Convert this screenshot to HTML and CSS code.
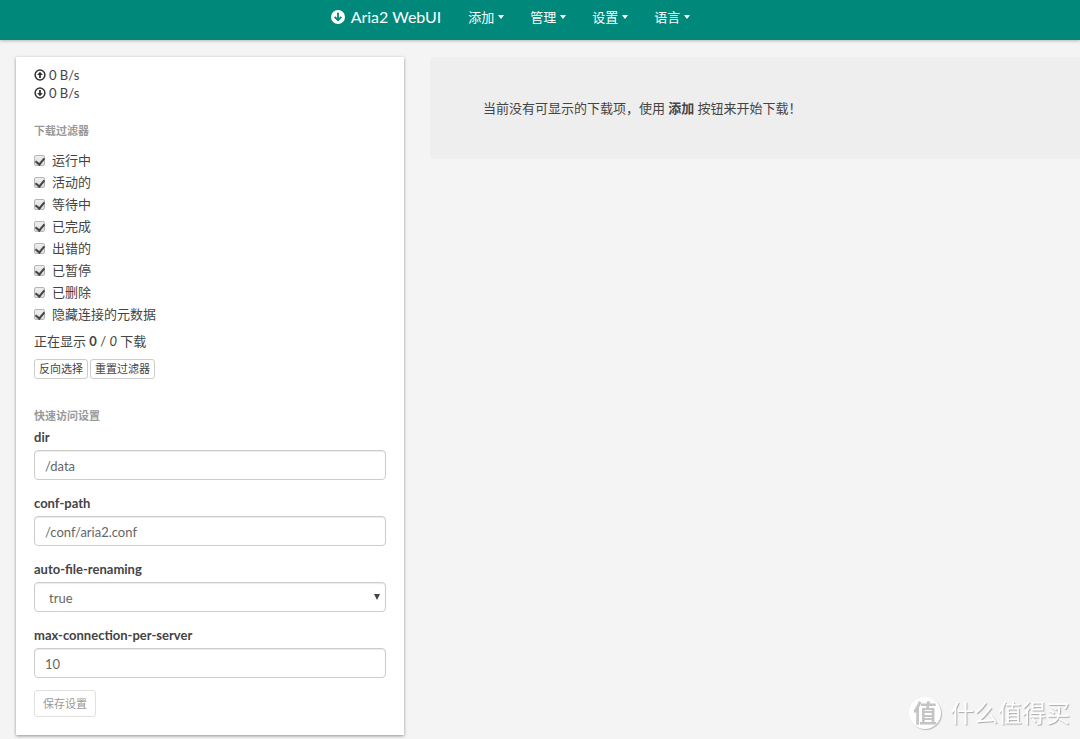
FILE: index.html
```html
<!DOCTYPE html>
<html lang="zh-CN">
<head>
<meta charset="utf-8">
<title>Aria2 WebUI</title>
<link rel="stylesheet" href="styles.css">
</head>
<body>
<header class="navbar">
  <a class="brand" href="#">
    <svg class="brand-icon" viewBox="0 0 14 14" aria-hidden="true"><circle cx="7" cy="7" r="7" fill="#fff"/><path d="M7 2.8v7M3.6 6.8L7 10.2l3.4-3.4" fill="none" stroke="#00897b" stroke-width="1.9"/></svg>
    <span>Aria2 WebUI</span>
  </a>
  <nav class="menu">
    <button class="menu-item" type="button">添加<span class="caret"></span></button>
    <button class="menu-item" type="button">管理<span class="caret"></span></button>
    <button class="menu-item" type="button">设置<span class="caret"></span></button>
    <button class="menu-item" type="button">语言<span class="caret"></span></button>
  </nav>
</header>
<div class="layout">
  <aside class="card">
    <div class="speed"><svg class="speed-icon" viewBox="0 0 12 12" aria-hidden="true"><circle cx="6" cy="6" r="4.9" fill="none" stroke="#333" stroke-width="1.5"/><path d="M6 2.7L3.1 6h2v3h1.8V6h2z" fill="#333"/></svg><span>0 B/s</span></div>
    <div class="speed"><svg class="speed-icon" viewBox="0 0 12 12" aria-hidden="true"><circle cx="6" cy="6" r="4.9" fill="none" stroke="#333" stroke-width="1.5"/><path d="M6 9.3L3.1 6h2V3h1.8v3h2z" fill="#333"/></svg><span>0 B/s</span></div>
    <h2 class="section-title filter-title">下载过滤器</h2>
    <div class="filters">
      <label class="filter"><input class="check" type="checkbox" checked>运行中</label>
      <label class="filter"><input class="check" type="checkbox" checked>活动的</label>
      <label class="filter"><input class="check" type="checkbox" checked>等待中</label>
      <label class="filter"><input class="check" type="checkbox" checked>已完成</label>
      <label class="filter"><input class="check" type="checkbox" checked>出错的</label>
      <label class="filter"><input class="check" type="checkbox" checked>已暂停</label>
      <label class="filter"><input class="check" type="checkbox" checked>已删除</label>
      <label class="filter"><input class="check" type="checkbox" checked>隐藏连接的元数据</label>
    </div>
    <p class="count">正在显示 <b>0</b> / <i>0</i> 下载</p>
    <div class="filter-actions">
      <button class="btn" type="button">反向选择</button>
      <button class="btn" type="button">重置过滤器</button>
    </div>
    <h2 class="section-title">快速访问设置</h2>
    <form class="settings">
      <div class="field"><label for="dir">dir</label><input class="control" id="dir" type="text" value="/data"></div>
      <div class="field"><label for="conf">conf-path</label><input class="control" id="conf" type="text" value="/conf/aria2.conf"></div>
      <div class="field"><label for="rename">auto-file-renaming</label>
        <div class="select-wrap"><select class="control select" id="rename"><option>true</option><option>false</option></select></div></div>
      <div class="field"><label for="max">max-connection-per-server</label><input class="control" id="max" type="text" value="10"></div>
      <button class="btn save" type="button" disabled>保存设置</button>
    </form>
  </aside>
  <main class="notice"><p>当前没有可显示的下载项，使用 <b>添加</b> 按钮来开始下载！</p></main>
</div>
<div class="watermark"><span class="watermark-badge">值</span><span>什么值得买</span></div>
</body>
</html>
```
FILE: styles.css
```css
* { box-sizing: border-box; }
body {
  margin: 0;
  background: #f4f4f4;
  color: #444;
  font: 13px/18px Lato, "Noto Sans CJK SC", sans-serif;
}
button, input, select { font: inherit; color: inherit; }
.navbar {
  display: flex;
  justify-content: center;
  height: 40px;
  padding: 0 46px 6px 0;
  background: #00897b;
  box-shadow: 0 1px 3px rgba(0, 0, 0, .25);
  color: #fff;
}
.brand {
  display: flex;
  align-items: center;
  gap: 6px;
  margin-right: 14px;
  color: #fff;
  font-size: 16px;
  text-decoration: none;
}
.brand-icon { width: 14px; height: 14px; }
.menu { display: flex; }
.menu-item {
  display: flex;
  align-items: center;
  gap: 4px;
  padding: 0 13px;
  border: 0;
  background: none;
}
.caret {
  border: 3px solid transparent;
  border-top: 4px solid #fff;
  border-bottom: 0;
}
.layout {
  display: grid;
  grid-template-columns: 37fr 62fr;
  align-items: start;
  gap: 26px;
  padding: 17px 0 4px 16px;
}
.card {
  padding: 9px 18px 18px;
  background: #fff;
  box-shadow: 0 1px 3px rgba(0, 0, 0, .4);
}
.speed { display: flex; align-items: center; gap: 3px; }
.speed-icon { width: 12px; height: 12px; }
.section-title {
  margin: 0;
  color: #999;
  font-size: 11px;
  font-weight: 700;
  line-height: 18px;
}
.filter-title { margin: 20px 0 9px; }
.filter { display: flex; align-items: center; gap: 7px; height: 22px; }
.check {
  appearance: none;
  width: 11px;
  height: 11px;
  margin: 0;
  border: 1px solid #b5b5b5;
  border-radius: 2px;
  background: linear-gradient(#eee, #ddd);
}
.check:checked::after {
  content: "";
  display: block;
  width: 4px;
  height: 7px;
  margin: 0 0 0 2px;
  border: solid #444;
  border-width: 0 2px 2px 0;
  transform: rotate(40deg);
}
.count { margin: 7px 0 9px; }
.filter-actions { display: flex; gap: 2px; margin-bottom: 28px; }
.btn {
  height: 20px;
  padding: 0 4px;
  border: 1px solid #ccc;
  border-radius: 3px;
  background: #fff;
  font-size: 11px;
  line-height: 16px;
}
.field { margin-bottom: 14px; }
.field:last-of-type { margin-bottom: 12px; }
.field label { display: block; margin: 3px 0 4px; font-weight: 700; }
.control {
  display: block;
  width: 100%;
  height: 30px;
  padding: 1px 10px 0;
  border: 1px solid #ccc;
  border-radius: 4px;
  background: #fff;
  box-shadow: inset 0 1px 1px rgba(0, 0, 0, .08);
  color: #666;
}
.select-wrap { position: relative; }
.select-wrap::after {
  content: "";
  position: absolute;
  top: 12px;
  right: 6px;
  border: 3px solid transparent;
  border-top: 6px solid #444;
  border-bottom: 0;
  pointer-events: none;
}
.select { appearance: none; padding-left: 14px; }
.settings .save {
  height: 27px;
  padding: 0 8px;
  border-color: #e0e0e0;
  color: #999;
}
.notice {
  padding: 42px 53px;
  border-radius: 5px 0 0 5px;
  background: #eee;
}
.notice p { margin: 0; }
.watermark {
  position: fixed;
  right: 10px;
  bottom: 10px;
  display: flex;
  align-items: center;
  gap: 9px;
  color: #fff;
  font-size: 24px;
  line-height: 32px;
  text-shadow: 1px 1px 1px #aaa;
}
.watermark-badge {
  width: 32px;
  height: 32px;
  border-radius: 50%;
  background: #fff;
  box-shadow: 1px 1px 1px #bbb;
  color: #c4c4c4;
  font-weight: 700;
  line-height: 31px;
  text-align: center;
  text-shadow: none;
}
```
